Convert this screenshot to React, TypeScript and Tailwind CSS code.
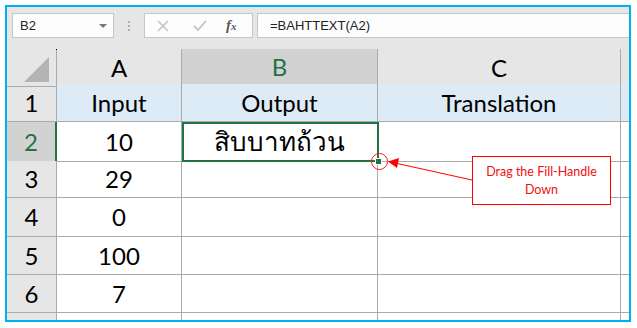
import React from 'react';

const GRID = 'border-[#ababab]';
const cellFont = { fontFamily: 'Lato, "Noto Sans", "DejaVu Sans", sans-serif' };

const rows = [
  { n: 1, a: 'Input', b: 'Output', c: 'Translation', h: 'h-[38px]', head: true },
  { n: 2, a: '10', b: 'สิบบาทถ้วน', c: '', h: 'h-[39px]' },
  { n: 3, a: '29', b: '', c: '', h: 'h-[37px]' },
  { n: 4, a: '0', b: '', c: '', h: 'h-[39px]' },
  { n: 5, a: '100', b: '', c: '', h: 'h-[38px]' },
  { n: 6, a: '7', b: '', c: '', h: 'h-[38px]' },
];

function Toolbar() {
  return (
    <div className="h-[42px] bg-[#e6e6e6] flex items-start pt-[6px] pl-[5px] shrink-0" style={{ fontFamily: '"Liberation Sans", Arial, sans-serif' }}>
      <div className="w-[102px] h-[25px] bg-[#fdfdfd] border border-[#c6c6c6] flex items-center justify-between pl-[7px] pr-[6px]">
        <span className="text-[13px] text-[#222]">B2</span>
        <span className="w-0 h-0 border-l-[4px] border-r-[4px] border-t-[4px] border-l-transparent border-r-transparent border-t-[#777]" />
      </div>
      <div className="w-[30px] h-[25px] flex flex-col items-center justify-center gap-[2px]">
        <span className="w-[2px] h-[2px] bg-[#b0b0b0]" />
        <span className="w-[2px] h-[2px] bg-[#b0b0b0]" />
        <span className="w-[2px] h-[2px] bg-[#b0b0b0]" />
      </div>
      <div className="w-[109px] h-[25px] bg-[#fdfdfd] border border-[#c6c6c6] flex items-center">
        <svg width="14" height="14" viewBox="0 0 14 14" className="ml-[11px]">
          <path d="M2 2 L12 12 M12 2 L2 12" stroke="#c4c4c4" strokeWidth="1.6" />
        </svg>
        <svg width="16" height="14" viewBox="0 0 16 14" className="ml-[22px]">
          <path d="M2 7 L6 11 L14 2" stroke="#c4c4c4" strokeWidth="1.8" fill="none" />
        </svg>
        <span className="ml-[18px] text-[15px] italic font-bold text-[#5a5a5a]" style={{ fontFamily: '"Liberation Serif", serif' }}>
          f<span className="text-[11px]">x</span>
        </span>
      </div>
      <div className="flex-1 ml-[4px] h-[25px] bg-[#fdfdfd] border-y border-l border-[#c6c6c6] flex items-center pl-[12px]">
        <span className="text-[13px] text-[#222]">=BAHTTEXT(A2)</span>
      </div>
    </div>
  );
}

export default function App() {
  return (
    <div className="w-[637px] h-[328px] bg-white overflow-hidden">
      <div className="ml-[5px] mt-[5px] w-[626px] h-[317px] border-2 border-[#00b0f0] flex flex-col overflow-hidden">
        <Toolbar />
        <div className="relative flex-1 bg-white" style={cellFont}>
          {/* column headers */}
          <div className="grid grid-cols-[50px_125px_196px_243px_8px] h-[35px] text-[24px] text-black">
            <div className={`relative bg-[#e6e6e6] border-r border-b ${GRID}`}>
              <svg width="30" height="30" viewBox="0 0 30 30" className="absolute right-[4px] bottom-[2px]">
                <polygon points="2,28 27,28 27,3" fill="#b4b4b4" />
              </svg>
              <span className="absolute right-[-1px] top-0 w-[1px] h-[1px] bg-black" />
            </div>
            <div className={`bg-[#e6e6e6] border-r border-b ${GRID} flex items-center justify-center`}>A</div>
            <div className={`bg-[#d2d2d2] border-r ${GRID} border-b-2 border-b-[#217346] flex items-center justify-center text-[#217346]`}>B</div>
            <div className={`bg-[#e6e6e6] border-r border-b ${GRID} flex items-center justify-center`}>C</div>
            <div className={`bg-[#e6e6e6] border-b ${GRID}`} />
          </div>
          {rows.map(r => (
            <div key={r.n} className={`grid grid-cols-[50px_125px_196px_243px_8px] ${r.h} text-[24px] text-black`}>
              <div
                className={`${r.n === 2 ? 'bg-[#d2d2d2] text-[#217346] border-r-2 border-r-[#217346]' : 'bg-[#e6e6e6] border-r border-[#ababab]'} border-b ${GRID} flex items-center justify-center`}
              >
                {r.n}
              </div>
              <div className={`${r.head ? 'bg-[#ddebf7]' : ''} border-r border-b ${GRID} flex items-center justify-center`}>{r.a}</div>
              <div className={`${r.head ? 'bg-[#ddebf7]' : 'text-[26px]'} border-r border-b ${GRID} flex items-center justify-center`}>{r.b}</div>
              <div className={`${r.head ? 'bg-[#ddebf7]' : ''} border-r border-b ${GRID} flex items-center justify-center`}>{r.c}</div>
              <div className={`${r.head ? 'bg-[#ddebf7]' : ''} border-b ${GRID}`} />
            </div>
          ))}
          <div className="grid grid-cols-[50px_125px_196px_243px_8px] h-[10px]">
            <div className={`bg-[#e6e6e6] border-r ${GRID}`} />
            <div className={`border-r ${GRID}`} />
            <div className={`border-r ${GRID}`} />
            <div className={`border-r ${GRID}`} />
            <div />
          </div>

          {/* selection B2 */}
          <div className="absolute left-[175px] top-[73px] w-[197px] h-[40px] border-2 border-[#217346]" />
          <div className="absolute left-[368px] top-[109px] w-[7px] h-[7px] bg-[#217346] border border-white" />
          <div className="absolute left-[364px] top-[104px] w-[17px] h-[17px] rounded-full border border-[#f02020]" />

          {/* arrow */}
          <svg className="absolute left-0 top-0" width="622" height="271" viewBox="0 0 622 271">
            <line x1="465" y1="131" x2="388" y2="114" stroke="#ff0000" strokeWidth="1" />
            <polygon points="381,112.5 392,109 390,119" fill="#ff0000" />
          </svg>

          {/* callout */}
          <div
            className="absolute left-[465px] top-[107px] w-[139px] h-[49px] bg-white border border-[#ff0000] flex flex-col items-center justify-center text-[12.5px] leading-[18px] text-[#ee1111]"
            style={{ fontFamily: 'Lato, "Liberation Sans", sans-serif' }}
          >
            <span>Drag the Fill-Handle</span>
            <span>Down</span>
          </div>
        </div>
      </div>
    </div>
  );
}
